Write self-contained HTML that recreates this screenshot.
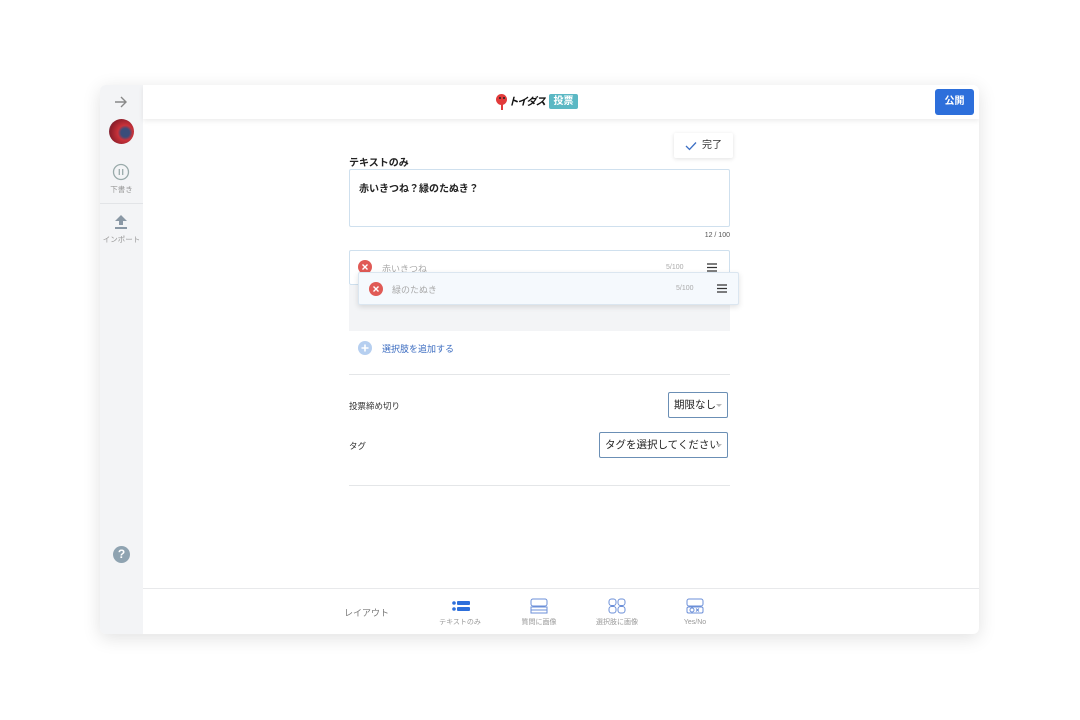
<!DOCTYPE html>
<html><head><meta charset="utf-8">
<style>
*{box-sizing:border-box;margin:0;padding:0}
body{width:1080px;height:720px;background:#fff;font-family:"Liberation Sans","Noto Sans CJK JP",sans-serif;position:relative;overflow:hidden;color:#222}
.win{position:absolute;left:100px;top:85px;width:879px;height:549px;border-radius:6px;background:#fff;box-shadow:0 4px 18px rgba(0,0,0,.12);overflow:hidden}
.side{position:absolute;left:0;top:0;width:43px;height:549px;background:#f3f4f6}
.hdr{position:absolute;left:43px;top:0;right:0;height:34px;background:#fff;box-shadow:0 2px 5px rgba(0,0,0,.08);z-index:2}
.abs{position:absolute}
.lbl{font-size:7.5px;color:#999;text-align:center;width:43px;left:0}
.box{position:absolute;border:1px solid #cfe0ee;border-radius:2px;background:#fff}
.sel{position:absolute;border:1px solid #6b8fb5;border-radius:2px;background:#fff;font-size:10.5px;color:#222;padding:0 5px;line-height:24px;white-space:nowrap;overflow:hidden}
.sel:after{content:"";position:absolute;right:5px;top:11px;border:3px solid transparent;border-top:3px solid #bbb}
.bl{position:absolute;top:532px;width:60px;text-align:center;font-size:7px;color:#999}
</style></head><body>
<div class="win">
 <div class="side">
  <svg class="abs" style="left:14px;top:11px" width="14" height="12" viewBox="0 0 14 12"><path d="M1 6H12M7 1L12 6L7 11" stroke="#888" stroke-width="1.4" fill="none"/></svg>
  <div class="abs" style="left:9px;top:34px;width:25px;height:25px;border-radius:50%;background:radial-gradient(circle at 65% 55%,#3a4d7a 0 20%,#c9323a 35%,#8e1e2a 70%,#5a6a90)"></div>
  <svg class="abs" style="left:12px;top:78px" width="18" height="18" viewBox="0 0 18 18"><circle cx="9" cy="9" r="7.5" stroke="#9aa" stroke-width="1.3" fill="none"/><path d="M7.3 6v6M10.7 6v6" stroke="#9aa" stroke-width="1.3"/></svg>
  <div class="abs lbl" style="top:99px">下書き</div>
  <div class="abs" style="left:0;top:118px;width:43px;height:1px;background:#e2e4e7"></div>
  <svg class="abs" style="left:14px;top:129px" width="14" height="16" viewBox="0 0 14 16"><path d="M7 1L13 7H9V11H5V7H1Z" fill="#8a98a5"/><rect x="1" y="13" width="12" height="2" fill="#8a98a5"/></svg>
  <div class="abs lbl" style="top:149px">インポート</div>
  <div class="abs" style="left:13px;top:461px;width:17px;height:17px;border-radius:50%;background:#8fa3b1;color:#fff;font-size:12px;font-weight:bold;text-align:center;line-height:17px">?</div>
 </div>
 <div class="hdr">
  <div class="abs" style="left:353px;top:9px;width:11px;height:11px;border-radius:50%;background:#e23b3b"></div>
  <div class="abs" style="left:358px;top:19px;width:2px;height:6px;background:#e23b3b"></div>
  <div class="abs" style="left:356px;top:12px;width:2px;height:2px;background:#222;border-radius:50%;box-shadow:4px 0 #222"></div>
  <div class="abs" style="left:365px;top:9px;font-size:10.5px;font-weight:bold;font-style:italic;color:#111;letter-spacing:-1.2px;white-space:nowrap">トイダス</div>
  <div class="abs" style="left:406px;top:9px;width:29px;height:15px;background:#5bb8c4;border-radius:2px;color:#fff;font-size:10px;font-weight:bold;text-align:center;line-height:15px">投票</div>
  <div class="abs" style="left:792px;top:4px;width:39px;height:26px;background:#2d6fdb;border-radius:3px;color:#fff;font-size:10px;font-weight:bold;text-align:center;line-height:26px">公開</div>
 </div>
 <div class="abs" style="left:574px;top:48px;width:59px;height:25px;background:#fff;box-shadow:0 1px 4px rgba(0,0,0,.12);border-radius:2px;font-size:10px;color:#333;line-height:25px;padding-left:28px">完了</div>
 <svg class="abs" style="left:585px;top:56px" width="12" height="10" viewBox="0 0 12 10"><path d="M1 5L4.5 8.5L11 1.5" stroke="#3c6fc4" stroke-width="1.3" fill="none"/></svg>
 <div class="abs" style="left:249px;top:69px;font-size:10px;font-weight:bold">テキストのみ</div>
 <div class="box" style="left:249px;top:84px;width:381px;height:58px"><div style="padding:10px 9px;font-size:10px;font-weight:bold">赤いきつね？緑のたぬき？</div></div>
 <div class="abs" style="left:590px;top:147px;width:40px;text-align:right;font-size:7px;color:#555">12 / 100</div>
 <div class="box" style="left:249px;top:165px;width:381px;height:35px"></div>
 <div class="abs" style="left:258px;top:175px;width:14px;height:14px;border-radius:50%;background:#e05a55"></div>
 <div class="abs" style="left:282px;top:177px;font-size:9px;color:#aaa">赤いきつね</div>
 <div class="abs" style="left:566px;top:179px;font-size:7px;color:#aaa">5/100</div>
 <div class="abs" style="left:249px;top:200px;width:381px;height:46px;background:#f3f4f6"></div>
 <div class="abs" style="left:258px;top:187px;width:381px;height:33px;background:#f5f9fd;border:1px solid #dbe6f0;border-radius:2px;box-shadow:0 2px 6px rgba(0,0,0,.12)">
  <svg class="abs" style="left:10px;top:9px" width="14" height="14" viewBox="0 0 14 14"><circle cx="7" cy="7" r="7" fill="#e05a55"/><path d="M4.5 4.5L9.5 9.5M9.5 4.5L4.5 9.5" stroke="#fff" stroke-width="1.4"/></svg>
  <div class="abs" style="left:33px;top:10px;font-size:9px;color:#aaa">緑のたぬき</div>
  <div class="abs" style="left:317px;top:12px;font-size:7px;color:#aaa">5/100</div>
  <svg class="abs" style="left:358px;top:11px" width="10" height="9" viewBox="0 0 10 9"><path d="M0 1H10M0 4.5H10M0 8H10" stroke="#333" stroke-width="1.3"/></svg>
 </div>
 <svg class="abs" style="left:258px;top:175px" width="14" height="14" viewBox="0 0 14 14"><path d="M4.5 4.5L9.5 9.5M9.5 4.5L4.5 9.5" stroke="#fff" stroke-width="1.4"/></svg>
 <svg class="abs" style="left:607px;top:178px" width="10" height="9" viewBox="0 0 10 9"><path d="M0 1H10M0 4.5H10M0 8H10" stroke="#333" stroke-width="1.3"/></svg>
 <svg class="abs" style="left:258px;top:256px" width="14" height="14" viewBox="0 0 14 14"><circle cx="7" cy="7" r="7" fill="#b6cff0"/><path d="M7 3.5V10.5M3.5 7H10.5" stroke="#fff" stroke-width="1.6"/></svg>
 <div class="abs" style="left:282px;top:257px;font-size:9px;color:#3a6bc0">選択肢を追加する</div>
 <div class="abs" style="left:249px;top:289px;width:381px;height:1px;background:#e4e6e8"></div>
 <div class="abs" style="left:249px;top:315px;font-size:8.5px;color:#333">投票締め切り</div>
 <div class="sel" style="left:568px;top:307px;width:60px;height:26px">期限なし</div>
 <div class="abs" style="left:249px;top:355px;font-size:8.5px;color:#333">タグ</div>
 <div class="sel" style="left:499px;top:347px;width:129px;height:26px">タグを選択してください</div>
 <div class="abs" style="left:249px;top:400px;width:381px;height:1px;background:#e4e6e8"></div>
 <div class="abs" style="left:43px;top:503px;right:0;height:1px;background:#e8e9eb"></div>
 <div class="abs" style="left:244px;top:521px;font-size:9px;color:#777">レイアウト</div>
 <svg class="abs" style="left:352px;top:515px" width="18" height="12" viewBox="0 0 18 12"><circle cx="2" cy="3" r="1.8" fill="#2d6fdb"/><circle cx="2" cy="9" r="1.8" fill="#2d6fdb"/><rect x="5" y="1" width="13" height="4" rx="1" fill="#2d6fdb"/><rect x="5" y="7" width="13" height="4" rx="1" fill="#2d6fdb"/></svg>
 <svg class="abs" style="left:430px;top:513px" width="18" height="16" viewBox="0 0 18 16"><g fill="none" stroke="#6b8fd8" stroke-width="1"><rect x="1" y="1" width="16" height="7" rx="2"/><rect x="1" y="9" width="16" height="3"/><rect x="1" y="12" width="16" height="3"/></g></svg>
 <svg class="abs" style="left:508px;top:513px" width="18" height="16" viewBox="0 0 18 16"><g fill="none" stroke="#6b8fd8" stroke-width="1"><rect x="1" y="1" width="7" height="6.5" rx="2.5"/><rect x="10" y="1" width="7" height="6.5" rx="2.5"/><rect x="1" y="8.5" width="7" height="6.5" rx="2.5"/><rect x="10" y="8.5" width="7" height="6.5" rx="2.5"/></g></svg>
 <svg class="abs" style="left:586px;top:513px" width="18" height="16" viewBox="0 0 18 16"><g fill="none" stroke="#6b8fd8" stroke-width="1"><rect x="1" y="1" width="16" height="7" rx="2"/><rect x="1" y="9" width="16" height="6" rx="1.5"/><circle cx="6" cy="12" r="2"/><path d="M10 10.5L13 13.5M13 10.5L10 13.5"/></g></svg>
 <div class="bl" style="left:330px">テキストのみ</div>
 <div class="bl" style="left:409px">質問に画像</div>
 <div class="bl" style="left:487px">選択肢に画像</div>
 <div class="bl" style="left:565px;font-family:'Liberation Sans',sans-serif;line-height:10px;top:533px">Yes/No</div>
</div>
</body></html>
